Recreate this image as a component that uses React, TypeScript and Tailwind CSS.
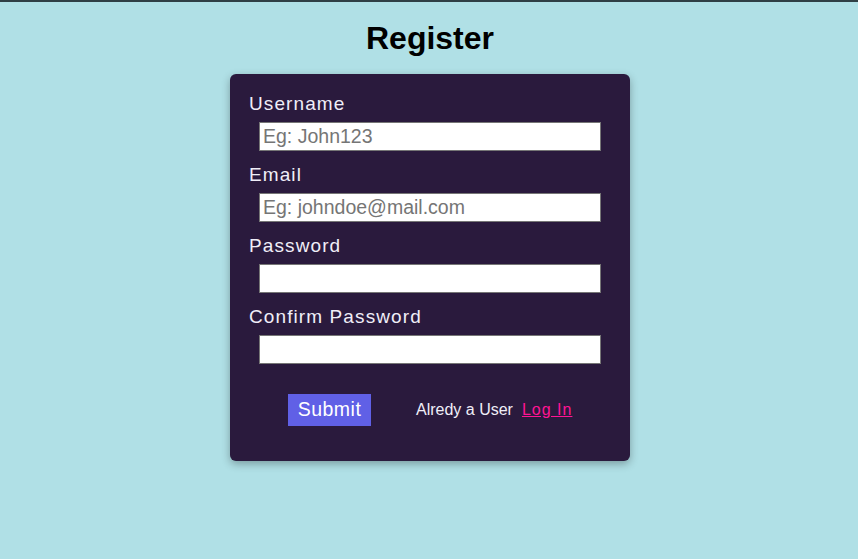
export default function App() {
  const fields = [
    { label: "Username", placeholder: "Eg: John123", type: "text" },
    { label: "Email", placeholder: "Eg: johndoe@mail.com", type: "email" },
    { label: "Password", placeholder: "", type: "password" },
    { label: "Confirm Password", placeholder: "", type: "password" },
  ];

  return (
    <div className="min-h-[559px] bg-[#b0e0e6] border-t-2 border-[#2f3f45] pl-[2px] font-['Liberation_Sans',Arial,sans-serif]">
      <h1 className="text-center text-[32px] font-bold leading-[37px] pt-[18px] text-black">
        Register
      </h1>
      <div className="w-[400px] mx-auto mt-[17px] bg-[#2a1a3d] rounded-md shadow-[0_3px_8px_rgba(0,0,0,0.3)] pt-[18px] pb-[35px] pl-[19px]">
        {fields.map((f) => (
          <div key={f.label} className="mb-[12px]">
            <label className="block pt-[1px] text-[19px] leading-[22px] tracking-[1.1px] text-[#f0eef8]">
              {f.label}
            </label>
            <input
              type={f.type}
              placeholder={f.placeholder}
              className="block ml-[10px] mt-[7px] w-[342px] h-[29px] bg-white border border-[#767676] px-[3px] text-[19.5px] text-black placeholder:text-[#757575] outline-none"
            />
          </div>
        ))}
        <div className="flex items-center mt-[30px]">
          <button className="ml-[39px] h-[32px] w-[83px] bg-[#6060e6] text-white text-[19.5px] tracking-[0.5px]">
            Submit
          </button>
          <span className="ml-[45px] text-[16px] text-[#f0eef8]">Alredy a User</span>
          <a href="#" className="ml-[9px] text-[16px] tracking-[1px] text-[#ff1493] underline">
            Log In
          </a>
        </div>
      </div>
    </div>
  );
}
